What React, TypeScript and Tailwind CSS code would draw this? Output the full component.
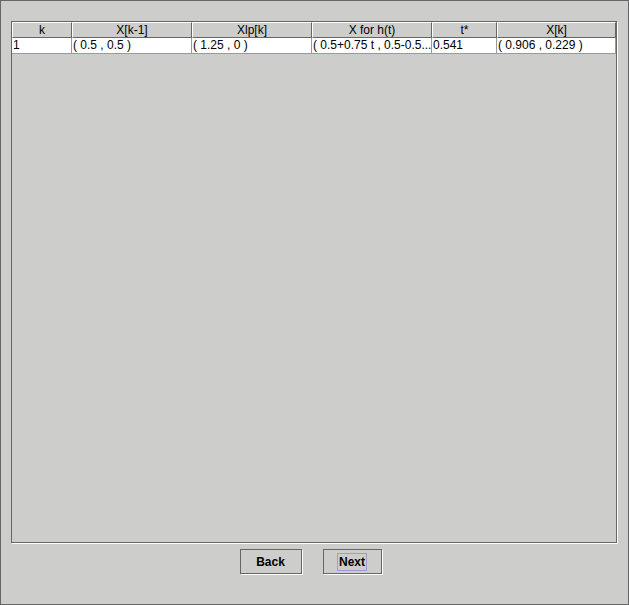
import React from 'react';

const columns = [
  { title: 'k', width: 'w-[60px]' },
  { title: 'X[k-1]', width: 'w-[120px]' },
  { title: 'Xlp[k]', width: 'w-[120px]' },
  { title: 'X for h(t)', width: 'w-[120px]' },
  { title: 't*', width: 'w-[65px]' },
  { title: 'X[k]', width: 'w-[119px]' },
];

const rows = [
  ['1', '( 0.5 , 0.5 )', '( 1.25 , 0 )', '( 0.5+0.75 t , 0.5-0.5...', '0.541', '( 0.906 , 0.229 )'],
];

function SwingButton({ label, focused, width }: { label: string; focused?: boolean; width: string }) {
  return (
    <button
      type="button"
      className={`${width} flex h-[25px] items-center justify-center border border-[#666666] bg-[#cdcecb] text-[12px] font-bold leading-none text-black shadow-[1px_1px_0_#ffffff]`}
    >
      <span className={focused ? 'border border-[#a09ad8] px-[1px] py-[2px]' : 'px-[2px] py-[3px]'}>{label}</span>
    </button>
  );
}

export default function App() {
  return (
    <div
      className="flex h-[605px] w-[629px] flex-col border border-[#666666] bg-[#cdcecb] pl-[10px] pr-[10px] pt-[20px]"
      style={{ fontFamily: '"Liberation Sans", Arial, sans-serif' }}
    >
      <div className="h-[522px] w-[606px] border border-[#666666] shadow-[1px_1px_0_#ffffff]">
        <div className="flex">
          {columns.map((col) => (
            <div
              key={col.title}
              className={`${col.width} h-[16px] border-b border-l border-r border-t border-b-[#666666] border-l-white border-r-[#666666] border-t-white text-center text-[12px] leading-[14px] text-black`}
            >
              {col.title}
            </div>
          ))}
        </div>
        {rows.map((row, i) => (
          <div key={i} className="flex bg-white">
            {row.map((cell, j) => (
              <div
                key={j}
                className={`${columns[j].width} h-[16px] overflow-hidden whitespace-nowrap border-b border-r border-[#9a9a9a] pl-[1px] text-[12px] leading-[15px] text-black`}
              >
                {cell}
              </div>
            ))}
          </div>
        ))}
      </div>
      <div className="mt-[6px] flex justify-center gap-[21px] pr-[8px]">
        <SwingButton label="Back" width="w-[62px]" />
        <SwingButton label="Next" width="w-[59px]" focused />
      </div>
    </div>
  );
}
